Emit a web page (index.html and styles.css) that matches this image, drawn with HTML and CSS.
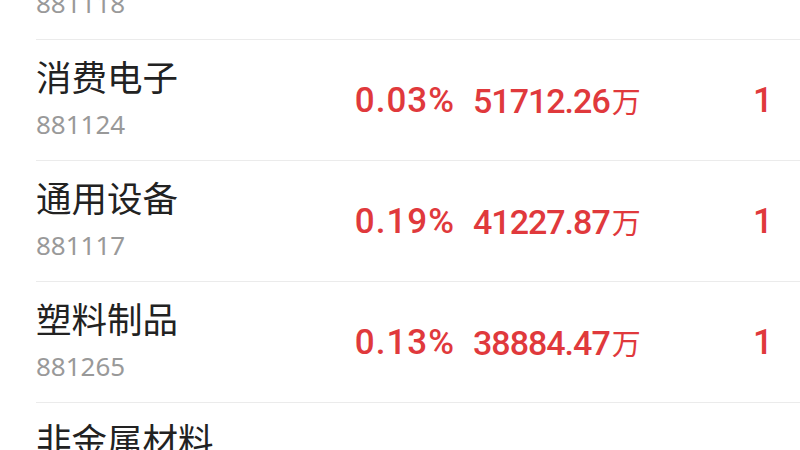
FILE: index.html
```html
<!DOCTYPE html>
<html lang="zh-CN">

<head>
    <meta charset="UTF-8">
    <meta name="viewport" content="width=device-width, initial-scale=1.0">
    <title>行业板块</title>
    <link rel="stylesheet" href="styles.css">
</head>
<body>
    <div id="list">
        <div class="row">
            <div class="name">
                <p class="title">半导体</p>
                <p class="code">881118</p>
            </div>
            <span class="pct">0.21%</span>
            <span class="amount">62210.15<em>万</em></span>
            <span class="num">1</span>
        </div>
        <div class="row">
            <div class="name">
                <p class="title">消费电子</p>
                <p class="code">881124</p>
            </div>
            <span class="pct">0.03%</span>
            <span class="amount">51712.26<em>万</em></span>
            <span class="num">1</span>
        </div>
        <div class="row">
            <div class="name">
                <p class="title">通用设备</p>
                <p class="code">881117</p>
            </div>
            <span class="pct">0.19%</span>
            <span class="amount">41227.87<em>万</em></span>
            <span class="num">1</span>
        </div>
        <div class="row">
            <div class="name">
                <p class="title">塑料制品</p>
                <p class="code">881265</p>
            </div>
            <span class="pct">0.13%</span>
            <span class="amount">38884.47<em>万</em></span>
            <span class="num">1</span>
        </div>
        <div class="row">
            <div class="name">
                <p class="title">非金属材料</p>
                <p class="code">881168</p>
            </div>
            <span class="pct">0.75%</span>
            <span class="amount">35575.55<em>万</em></span>
            <span class="num zero">0</span>
        </div>
    </div>
</body>
</html>
```

FILE: styles.css
```css
*{
    margin: 0;
    padding: 0;
}
body{
    background: #ffffff;
    font-family: "Noto Sans", "Noto Sans CJK SC", sans-serif;
    overflow: hidden;
}

#list{
    margin-top: -81px;
}
.row{
    display: grid;
    grid-template-columns: 298px 121px 18px 180px 1fr;
    align-items: center;
    height: 120px;
    margin-left: 36px;
    padding-right: 27px;
    border-bottom: 1px solid #ebebeb;
}
.name{
    grid-column: 1;
}
.title{
    font-size: 35.5px;
    line-height: 32px;
    color: #222222;
    white-space: nowrap;
}
.code{
    font-size: 26px;
    line-height: 32px;
    color: #999999;
    margin-top: 15px;
}

.pct, .amount, .num{
    font-family: Roboto, "Noto Sans CJK SC", sans-serif;
    font-weight: 500;
    font-size: 35px;
    color: #e0393c;
    white-space: nowrap;
}
.pct{
    grid-column: 2;
    text-align: right;
    letter-spacing: 1px;
}
.amount{
    grid-column: 4;
    font-size: 34px;
    letter-spacing: -1px;
}
.amount em{
    font-style: normal;
    font-family: "Noto Sans CJK SC", sans-serif;
    font-weight: 400;
    font-size: 29px;
    letter-spacing: 0;
    margin-left: 2px;
}
.num{
    grid-column: 5;
    text-align: right;
}
.zero{
    color: #222222;
}
```
